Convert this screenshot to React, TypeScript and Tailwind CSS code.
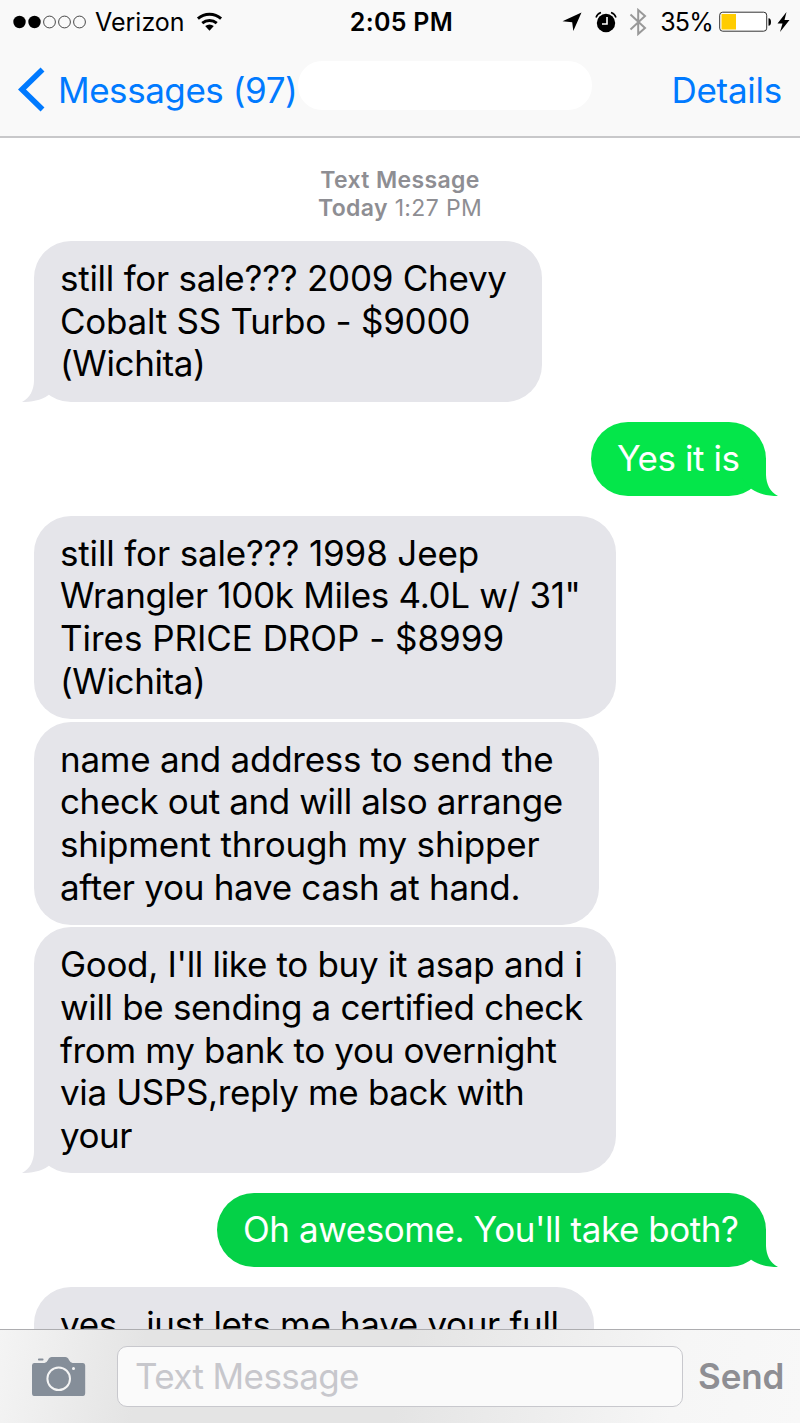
import clsx from "clsx";

type Line = { text: string; track?: string };

type Message = {
  lines: Line[];
  mine?: boolean;
  tail?: boolean;
  // width, gap above and bubble colour
  box: string;
};

const messages: Message[] = [
  {
    box: "w-[508px] h-[161px] bg-[#e5e5ea] text-[#e5e5ea]",
    tail: true,
    lines: [
      { text: "still for sale??? 2009 Chevy", track: "tracking-[-0.26px]" },
      { text: "Cobalt SS Turbo - $9000", track: "tracking-[-0.26px]" },
      { text: "(Wichita)", track: "tracking-[-0.4px]" },
    ],
  },
  {
    box: "w-[175px] h-[74px] mt-[19.5px] bg-[#04e64a] text-[#04e64a]",
    mine: true,
    tail: true,
    lines: [{ text: "Yes it is", track: "tracking-[-0.45px]" }],
  },
  {
    box: "w-[582px] h-[203px] mt-[20px] bg-[#e5e5ea] text-[#e5e5ea]",
    lines: [
      { text: "still for sale??? 1998 Jeep", track: "tracking-[-0.15px]" },
      { text: "Wrangler 100k Miles 4.0L w/ 31\"", track: "tracking-[-0.32px]" },
      { text: "Tires PRICE DROP - $8999", track: "tracking-[-0.04px]" },
      { text: "(Wichita)", track: "tracking-[-0.4px]" },
    ],
  },
  {
    box: "w-[565px] h-[203px] mt-[3px] bg-[#e5e5ea] text-[#e5e5ea]",
    lines: [
      { text: "name and address to send the", track: "tracking-[-0.25px]" },
      { text: "check out and will also arrange", track: "tracking-[-0.39px]" },
      { text: "shipment through my shipper", track: "tracking-[-0.18px]" },
      { text: "after you have cash at hand.", track: "tracking-[-0.28px]" },
    ],
  },
  {
    box: "w-[582px] h-[246px] mt-[2.7px] bg-[#e5e5ea] text-[#e5e5ea]",
    tail: true,
    lines: [
      { text: "Good, I'll like to buy it asap and i", track: "tracking-[-0.33px]" },
      { text: "will be sending a certified check", track: "tracking-[-0.34px]" },
      { text: "from my bank to you overnight", track: "tracking-[-0.34px]" },
      { text: "via USPS,reply me back with", track: "tracking-[-0.37px]" },
      { text: "your", track: "tracking-[-0.5px]" },
    ],
  },
  {
    box: "w-[549px] h-[74px] mt-[19.5px] bg-[#04d147] text-[#04d147]",
    mine: true,
    tail: true,
    lines: [{ text: "Oh awesome. You'll take both?", track: "tracking-[-0.44px]" }],
  },
  {
    box: "w-[560px] h-[160px] mt-[20px] bg-[#e5e5ea] text-[#e5e5ea]",
    lines: [{ text: "yes...just lets me have your full", track: "tracking-[-0.33px]" }],
  },
];

function Tail({ mine }: { mine?: boolean }) {
  return (
    <svg
      className={clsx("absolute bottom-0 h-[38px] w-[36px]", mine ? "-right-[12px]" : "-left-[12px] -scale-x-100")}
      viewBox="0 0 36 38"
    >
      <path d="M24 0V17C24.300 26 28 34 36 38C27 38 17 36.500 9.500 31L0 20V0Z" fill="currentColor" />
    </svg>
  );
}

function Bubble({ lines, mine, tail, box }: Message) {
  return (
    <div className={clsx("relative shrink-0 rounded-[37px] pl-[26px]", box, mine ? "mr-[34px] self-end pt-[15.3px]" : "ml-[34px] pt-[16px]")}>
      {tail && <Tail mine={mine} />}
      <div className={clsx("relative whitespace-nowrap text-[35px] leading-[42.7px]", mine ? "text-white" : "text-black")}>
        {lines.map((l, i) => (
          <p key={i} className={l.track}>{l.text}</p>
        ))}
      </div>
    </div>
  );
}

function StatusBar() {
  return (
    <div className="grid h-[44px] grid-cols-[1fr_auto_1fr] items-center whitespace-nowrap pl-[13px] pr-[10px] text-black">
      <div className="flex items-center">
        <svg className="h-[14px] w-[74px]" viewBox="0 0 74 14">
          <circle cx="6.500" cy="7" r="6.200" />
          <circle cx="21.500" cy="7" r="6.200" />
          <g fill="none" stroke="#333" strokeWidth="0.900">
            <circle cx="36.500" cy="7" r="5.900" />
            <circle cx="51.500" cy="7" r="5.900" />
            <circle cx="66.500" cy="7" r="5.900" />
          </g>
        </svg>
        <span className="ml-[8px] pt-[2px] text-[25px]">Verizon</span>
        <svg className="ml-[11px] h-[20px] w-[27px]" viewBox="0 0 28 20" fill="none" stroke="#000" strokeWidth="3">
          <path d="M2 6.500A18 18 0 0 1 26 6.500" />
          <path d="M6.500 11.200A11.500 11.500 0 0 1 21.500 11.200" />
          <path d="M9.500 14.200Q14 10.800 18.500 14.200L14 19Z" fill="#000" stroke="none" />
        </svg>
      </div>
      <span className="pt-[2px] text-[25px] font-semibold tracking-[0.3px]">2:05 PM</span>
      <div className="flex items-center justify-end">
        <svg className="h-[20px] w-[20px]" viewBox="0 0 20 20">
          <path d="M19.500 0.500L11.300 19L10.200 10.300L0.500 9.200Z" />
        </svg>
        <svg className="ml-[13px] h-[22px] w-[22px]" viewBox="0 0 22 22">
          <circle cx="11" cy="12" r="9.200" />
          <path d="M1 6.500Q2.200 2.700 6 1.500M21 6.500Q19.800 2.700 16 1.500" fill="none" stroke="#000" strokeWidth="1.500" />
          <path d="M12 6V13H7" fill="none" stroke="#fff" strokeWidth="1.600" />
        </svg>
        <svg className="ml-[12px] h-[28px] w-[18px]" viewBox="0 0 18 28" fill="none" stroke="#999" strokeWidth="2">
          <path d="M1.500 6.500L16 20L9.200 26V2L16 8L1.500 21.500" />
        </svg>
        <span className="ml-[13px] pt-[2px] text-[25px] tracking-[-0.8px]">35%</span>
        <svg className="ml-[6px] h-[22px] w-[53px]" viewBox="0 0 53 22">
          <rect x="0.700" y="1.200" width="47" height="19" rx="3" fill="#fff" stroke="#333" />
          <rect x="2.500" y="3" width="14.500" height="15.500" fill="#ffcc00" />
          <path d="M49.500 7.200Q52 7.500 52 11Q52 14.500 49.500 14.800Z" />
        </svg>
        <svg className="ml-[5px] h-[20px] w-[13px]" viewBox="0 0 13 20">
          <path d="M9.500 0L0.500 11.500H5.500L3 20L12.500 8H7.500Z" />
        </svg>
      </div>
    </div>
  );
}

function NavBar() {
  return (
    <div className="flex h-[92px] items-start whitespace-nowrap pl-[18px] pr-[18px] text-[35px] leading-[44px] text-[#007aff]">
      <svg className="mt-[23px] h-[45px] w-[28px]" viewBox="0 0 28 45">
        <path d="M24.500 2.500L4 22.500L24.500 42.500" fill="none" stroke="#007aff" strokeWidth="5.600" />
      </svg>
      <span className="ml-[12px] mt-[24px] w-[240px] tracking-[-0.45px]">Messages (97)</span>
      <div className="mt-[17px] h-[49px] w-[294px] rounded-[24px] bg-white" />
      <span className="ml-auto mt-[24px] tracking-[-0.25px]">Details</span>
    </div>
  );
}

function InputBar() {
  return (
    <footer className="flex h-[94px] items-center border-t-[1px] border-[#adadb0] bg-[linear-gradient(100deg,#f4f4f4_0%,#e4e4e4_18%,#e4e4e4_50%,#f6f6f6_84%,#f8f8f8_100%)] pl-[31px]">
      <svg className="h-[41px] w-[55px]" viewBox="0 0 55 41">
        <rect x="7" y="2.500" width="5.500" height="2" rx="0.800" fill="#858e99" />
        <path d="M3 7H13.500Q15.500 7 17 4L17.800 2.500Q18.800 1 20.500 1H34.500Q36.200 1 37.200 2.500L38 4Q39.500 7 41.500 7H52Q54.200 7 54.200 9.500V37Q54.200 40 52 40H3Q1 40 1 37V9.500Q1 7 3 7Z" fill="#858e99" />
        <circle cx="27.700" cy="22.800" r="11.300" fill="none" stroke="#f4f4f4" strokeWidth="2" />
        <circle cx="42.500" cy="12.500" r="1.500" fill="#f4f4f4" />
      </svg>
      <div className="ml-[31px] h-[61px] w-[566px] rounded-[10px] border-[1.5px] border-[#c8c8cd] bg-[#fafafa] pl-[17px] text-[35px] leading-[58px] tracking-[-0.6px] text-[#c7c7cc]">
        Text Message
      </div>
      <span className="ml-[15px] text-[35px] font-semibold tracking-[-0.1px] text-[#8e8e93]">Send</span>
    </footer>
  );
}

function App() {
  return (
    <div className="flex h-[1423px] w-[800px] flex-col overflow-hidden bg-white font-['Inter','Liberation_Sans',sans-serif]">
      <header className="h-[138px] shrink-0 border-b-2 border-[#c8c8ca] bg-[#f9f9f9]">
        <StatusBar />
        <NavBar />
      </header>
      <main className="flex min-h-0 flex-1 flex-col overflow-hidden">
        <div className="mb-[19px] mt-[28px] text-center text-[23px] leading-[28px] tracking-[0.36px] text-[#8e8e93]">
          <p className="font-semibold">Text Message</p>
          <p><b className="font-semibold">Today</b> 1:27 PM</p>
        </div>
        {messages.map((m, i) => (
          <Bubble key={i} {...m} />
        ))}
      </main>
      <InputBar />
    </div>
  );
}

export default App;
